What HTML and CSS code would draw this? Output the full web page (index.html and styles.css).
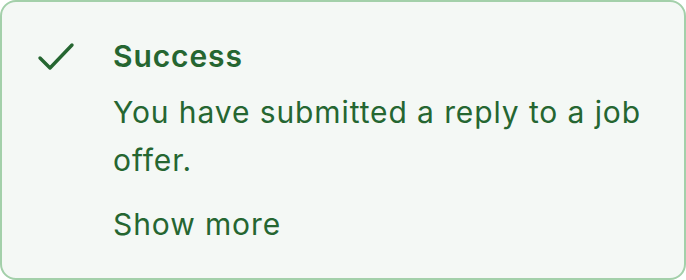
FILE: index.html
```html
<!DOCTYPE html>
<html>
<head>
<meta charset="utf-8">
<link rel="stylesheet" href="styles.css">
</head>
<body>
<div class="alert">
  <div class="icon">
    <svg width="40" height="36" viewBox="0 0 40 36" fill="none"><path d="M4 18 L14 28 L36 5" stroke="currentColor" stroke-width="3.4" stroke-linecap="round" stroke-linejoin="round"/></svg>
  </div>
  <div class="content">
    <div class="title">Success</div>
    <div class="message">You have submitted a reply to a job offer.</div>
    <div class="more">Show more</div>
  </div>
</div>
</body>
</html>
```
FILE: styles.css
```css
html, body { margin: 0; padding: 0; }
body { width: 686px; height: 280px; font-family: Inter, "Noto Sans", sans-serif; }
.alert {
  box-sizing: border-box;
  width: 686px;
  height: 280px;
  background: #f4f8f5;
  border: 2px solid #a3d0aa;
  border-radius: 16px;
  color: #256631;
  display: flex;
  padding: 34px 20px 0 34px;
  gap: 37px;
}
.icon { width: 40px; height: 36px; margin-top: 4px; flex: none; }
.icon svg { display: block; }
.content { flex: 1; letter-spacing: 0.9px; font-size: 30px; }
.title { font-weight: 600; line-height: 40px; }
.message { line-height: 48px; margin-top: 12px; }
.more { line-height: 48px; margin-top: 16px; }
```
